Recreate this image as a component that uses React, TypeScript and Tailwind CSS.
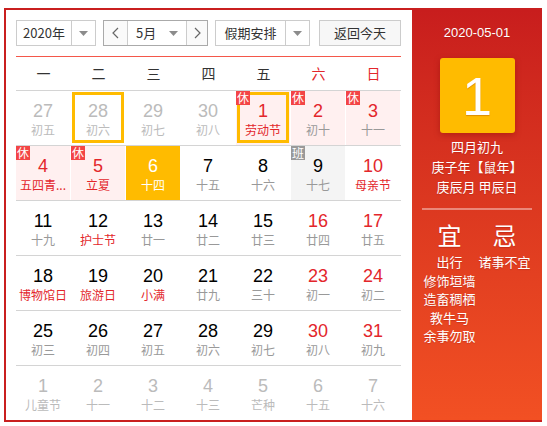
import React from "react";

type Day = {
  n: number;
  l: string;
  other?: boolean; // prev/next month
  redNum?: boolean;
  redLabel?: boolean;
  rest?: boolean; // 休
  work?: boolean; // 班
  today?: boolean;
  selected?: boolean;
  hover?: boolean;
};

const rows: Day[][] = [
  [
    { n: 27, l: "初五", other: true },
    { n: 28, l: "初六", other: true, hover: true },
    { n: 29, l: "初七", other: true },
    { n: 30, l: "初八", other: true },
    { n: 1, l: "劳动节", redNum: true, redLabel: true, rest: true, selected: true },
    { n: 2, l: "初十", redNum: true, rest: true },
    { n: 3, l: "十一", redNum: true, rest: true },
  ],
  [
    { n: 4, l: "五四青...", redNum: true, redLabel: true, rest: true },
    { n: 5, l: "立夏", redNum: true, redLabel: true, rest: true },
    { n: 6, l: "十四", today: true },
    { n: 7, l: "十五" },
    { n: 8, l: "十六" },
    { n: 9, l: "十七", work: true },
    { n: 10, l: "母亲节", redNum: true, redLabel: true },
  ],
  [
    { n: 11, l: "十九" },
    { n: 12, l: "护士节", redLabel: true },
    { n: 13, l: "廿一" },
    { n: 14, l: "廿二" },
    { n: 15, l: "廿三" },
    { n: 16, l: "廿四", redNum: true },
    { n: 17, l: "廿五", redNum: true },
  ],
  [
    { n: 18, l: "博物馆日", redLabel: true },
    { n: 19, l: "旅游日", redLabel: true },
    { n: 20, l: "小满", redLabel: true },
    { n: 21, l: "廿九" },
    { n: 22, l: "三十" },
    { n: 23, l: "初一", redNum: true },
    { n: 24, l: "初二", redNum: true },
  ],
  [
    { n: 25, l: "初三" },
    { n: 26, l: "初四" },
    { n: 27, l: "初五" },
    { n: 28, l: "初六" },
    { n: 29, l: "初七" },
    { n: 30, l: "初八", redNum: true },
    { n: 31, l: "初九", redNum: true },
  ],
  [
    { n: 1, l: "儿童节", other: true },
    { n: 2, l: "十一", other: true },
    { n: 3, l: "十二", other: true },
    { n: 4, l: "十三", other: true },
    { n: 5, l: "芒种", other: true },
    { n: 6, l: "十五", other: true },
    { n: 7, l: "十六", other: true },
  ],
];

const weekdays = ["一", "二", "三", "四", "五", "六", "日"];

function Caret() {
  return (
    <svg width="9" height="5" viewBox="0 0 9 5">
      <path d="M0 0h9L4.5 5z" fill="#8c8c8c" />
    </svg>
  );
}

function Chevron({ dir }: { dir: "l" | "r" }) {
  return (
    <svg width="7" height="12" viewBox="0 0 7 12">
      <polyline
        points={dir === "l" ? "6,1 1,6 6,11" : "1,1 6,6 1,11"}
        fill="none"
        stroke="#666"
        strokeWidth="1.2"
      />
    </svg>
  );
}

function Cell({ d }: { d: Day }) {
  let bg = "";
  if (d.today) bg = "bg-[#ffbb00]";
  else if (d.rest) bg = "bg-[#fff0f0]";
  else if (d.work) bg = "bg-[#f4f4f4]";

  let numColor = "text-[#000]";
  let labelColor = "text-[#999]";
  if (d.other) {
    numColor = "text-[#bbb]";
    labelColor = "text-[#bbb]";
  } else if (d.today) {
    numColor = "text-white";
    labelColor = "text-white";
  } else {
    if (d.redNum) numColor = "text-[#e3262b]";
    if (d.redLabel) labelColor = "text-[#e3262b]";
  }

  return (
    <div className="relative h-full w-[55px]">
      <div className={`mr-px flex h-full flex-col items-center pt-[9px] ${bg}`}>
        <div className={`font-['Liberation_Sans',Arial,sans-serif] text-[18px] leading-[22px] ${numColor}`}>
          {d.n}
        </div>
        <div className={`whitespace-nowrap text-center text-[12px] leading-[16px] ${labelColor}`}>
          {d.l}
        </div>
      </div>
      {(d.selected || d.hover) && (
        <div className="absolute bottom-[2px] left-px right-[2px] top-px border-[3px] border-[#ffbb00]" />
      )}
      {d.rest && (
        <div className="absolute left-0 top-0 flex h-[14px] w-[14px] items-center justify-center bg-[#f34545] text-[12px] leading-none text-white">
          休
        </div>
      )}
      {d.work && (
        <div className="absolute left-0 top-0 flex h-[14px] w-[14px] items-center justify-center bg-[#999] text-[12px] leading-none text-white">
          班
        </div>
      )}
    </div>
  );
}

export default function App() {
  return (
    <div className="pl-[4px] pt-[8px] font-['Noto_Sans_CJK_SC','Microsoft_YaHei',sans-serif]">
      <div className="flex h-[414px] w-[538px] border-y-2 border-l-2 border-[#c91f1f]">
        {/* calendar */}
        <div className="w-[406px] bg-white pl-[10px] pt-[10px]">
          {/* toolbar */}
          <div className="flex h-[26px] text-[13px] text-[#333]">
            <div className="flex w-[80px] border border-[#ccc]">
              <div className="flex flex-1 items-center justify-center">2020年</div>
              <div className="flex w-[24px] items-center justify-center border-l border-[#ccc]">
                <Caret />
              </div>
            </div>
            <div className="ml-[7px] flex w-[105px] border border-[#aaa]">
              <div className="flex w-[23px] items-center justify-center bg-[#fafafa]">
                <Chevron dir="l" />
              </div>
              <div className="flex w-[60px] items-center border-x border-[#ccc] pl-[8px] pr-[8px]">
                <span className="flex-1">5月</span>
                <Caret />
              </div>
              <div className="flex flex-1 items-center justify-center bg-[#fafafa]">
                <Chevron dir="r" />
              </div>
            </div>
            <div className="ml-[7px] flex w-[95px] border border-[#ccc]">
              <div className="flex flex-1 items-center justify-center">假期安排</div>
              <div className="flex w-[24px] items-center justify-center border-l border-[#ccc]">
                <Caret />
              </div>
            </div>
            <div className="ml-[9px] flex w-[82px] items-center justify-center border border-[#ccc] bg-[#f7f7f7]">
              返回今天
            </div>
          </div>

          <div className="mt-[10px] h-px w-[385px] bg-[#f4574a]" />

          {/* weekday header */}
          <div className="flex h-[33px] w-[385px] items-center text-[14px]">
            {weekdays.map((w, i) => (
              <div
                key={w}
                className={`w-[55px] text-center ${i >= 5 ? "text-[#e3262b]" : "text-[#333]"}`}
              >
                {w}
              </div>
            ))}
          </div>

          {/* days */}
          <div className="w-[385px]">
            {rows.map((r, i) => (
              <div key={i} className="flex h-[55px] border-t border-[#d4d4d4]">
                {r.map((d, j) => (
                  <Cell key={j} d={d} />
                ))}
              </div>
            ))}
          </div>
        </div>

        {/* detail panel */}
        <div className="flex w-[130px] flex-col items-center bg-linear-to-b from-[#c81d1d] to-[#f25023] pt-[13px] text-white [text-shadow:0_1px_1px_rgba(120,0,0,0.25)]">
          <div className="font-['Liberation_Sans',Arial,sans-serif] text-[13px] leading-[20px]">
            2020-05-01
          </div>
          <div className="mt-[15px] flex h-[75px] w-[75px] items-center justify-center rounded-[3px] bg-[#ffbb00] font-['Liberation_Sans',Arial,sans-serif] text-[54px] leading-none shadow-[0_2px_6px_rgba(120,0,0,0.35)]">
            1
          </div>
          <div className="mt-[4px] text-center text-[13px] leading-[20px]">
            <div>四月初九</div>
            <div>庚子年【鼠年】</div>
            <div>庚辰月 甲辰日</div>
          </div>
          <div className="mt-[11px] h-[2px] w-[110px] bg-white/40" />
          <div className="flex w-[110px]">
            <div className="flex w-[55px] flex-col items-center">
              <div className="mt-[10px] text-[24px] leading-[30px]">宜</div>
              <div className="mt-[3px] text-center text-[13px] leading-[18.5px]">
                <div>出行</div>
                <div>修饰垣墙</div>
                <div>造畜稠栖</div>
                <div>教牛马</div>
                <div>余事勿取</div>
              </div>
            </div>
            <div className="flex w-[55px] flex-col items-center">
              <div className="mt-[10px] text-[24px] leading-[30px]">忌</div>
              <div className="mt-[3px] text-center text-[13px] leading-[18.5px]">
                <div className="whitespace-nowrap">诸事不宜</div>
              </div>
            </div>
          </div>
        </div>
      </div>
    </div>
  );
}
